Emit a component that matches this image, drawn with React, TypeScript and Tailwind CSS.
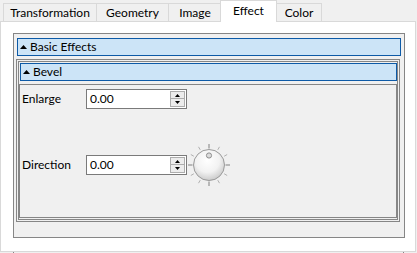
import React from 'react';

const GRAY = 'border-[#868686]';

function Tab({ label, className }: { label: string; className: string }) {
  return (
    <div className={`flex items-center justify-center border-x border-t ${className}`}>
      {label}
    </div>
  );
}

function Arrow({ up }: { up?: boolean }) {
  return (
    <svg width="7" height="4" viewBox="0 0 7 4">
      <polygon points={up ? '3.5,0 7,4 0,4' : '0,0 7,0 3.5,4'} fill="#000" />
    </svg>
  );
}

function SectionHeader({ label, className }: { label: string; className: string }) {
  return (
    <div className={`flex items-center h-[18px] bg-[#cce4f7] border border-[#0d5aa7] ${className}`}>
      <span className="ml-[2px] mr-[3px] flex items-center">
        <Arrow up />
      </span>
      <span className="leading-none">{label}</span>
    </div>
  );
}

function SpinBox({ value }: { value: string }) {
  return (
    <div className="w-[101px] h-[20px] border border-[#7a7a7a] bg-white flex items-center">
      <span className="flex-1 pl-[3px] leading-none">{value}</span>
      <div className="flex flex-col w-[15px] mr-[1px]">
        <div className="h-[8px] border border-[#adadad] bg-[#ececec] flex items-center justify-center">
          <svg width="5" height="3" viewBox="0 0 5 3">
            <polygon points="2.5,0 5,3 0,3" fill="#000" />
          </svg>
        </div>
        <div className="h-[8px] border border-t-0 border-[#adadad] bg-[#ececec] flex items-center justify-center">
          <svg width="5" height="3" viewBox="0 0 5 3">
            <polygon points="0,0 5,0 2.5,3" fill="#000" />
          </svg>
        </div>
      </div>
    </div>
  );
}

function Dial() {
  const ticks = Array.from({ length: 12 }, (_, i) => i * 30);
  return (
    <svg width="44" height="44" viewBox="0 0 44 44">
      <defs>
        <radialGradient id="knob" cx="45%" cy="35%" r="70%">
          <stop offset="0%" stopColor="#ffffff" />
          <stop offset="55%" stopColor="#f2f2f2" />
          <stop offset="100%" stopColor="#c4c4c4" />
        </radialGradient>
      </defs>
      {ticks.map((a) => {
        const major = a % 90 === 0;
        const rad = (a * Math.PI) / 180;
        const r1 = major ? 16.5 : 17.5;
        const r2 = 21;
        return (
          <line
            key={a}
            x1={22 + Math.sin(rad) * r1}
            y1={22 - Math.cos(rad) * r1}
            x2={22 + Math.sin(rad) * r2}
            y2={22 - Math.cos(rad) * r2}
            stroke={major ? '#808080' : '#b0b0b0'}
            strokeWidth="1"
          />
        );
      })}
      <circle cx="22" cy="22" r="15.5" fill="url(#knob)" stroke="#9a9a9a" strokeWidth="1" />
      <circle cx="22" cy="12.5" r="2.6" fill="#dcdcdc" stroke="#8f8f8f" strokeWidth="1" />
    </svg>
  );
}

export default function App() {
  return (
    <div className="w-[417px] h-[253px] overflow-hidden bg-[#f0f0f0] text-[12px] text-black font-['Lato','Liberation_Sans',sans-serif]">
      {/* tab strip */}
      <div className="flex items-end h-[21px] pl-[3px]">
        <Tab label="Transformation" className="w-[94px] h-[18px] border-[#d9d9d9] bg-[#f0f0f0]" />
        <Tab label="Geometry" className="w-[73px] h-[18px] -ml-px border-[#d9d9d9] bg-[#f0f0f0]" />
        <Tab label="Image" className="w-[54px] h-[18px] -ml-px border-[#d9d9d9] bg-[#f0f0f0]" />
        <Tab label="Effect" className="relative z-10 w-[57px] h-[22px] -ml-[2px] -mb-px pb-[2px] border-[#d9d9d9] bg-white" />
        <Tab label="Color" className="w-[46px] h-[18px] -ml-px border-[#d9d9d9] bg-[#f0f0f0]" />
      </div>

      {/* tab page */}
      <div className="w-[416px] h-[231px] border border-[#d9d9d9] bg-white pl-[12px] pt-[11px]">
        <div className={`flex flex-col w-[392px] h-[205px] border ${GRAY} bg-[#f0f0f0]`}>
          <SectionHeader label="Basic Effects" className="mt-[4px] ml-[3px] w-[384px]" />

          <div className={`mt-[3px] ml-[2px] w-[384px] h-[163px] border ${GRAY} p-[1px]`}>
            <div className={`flex flex-col h-full border ${GRAY}`}>
              <SectionHeader label="Bevel" className="mt-[1px] ml-[1px] w-[377px]" />

              <div className={`flex-1 mt-[3px] mb-[1px] border ${GRAY}`}>
                <div className="mt-[4px] flex items-center">
                  <div className="w-[66px] pl-[2px]">Enlarge</div>
                  <SpinBox value="0.00" />
                </div>
                <div className="mt-[34px] flex items-center h-[44px]">
                  <div className="w-[66px] pl-[2px]">Direction</div>
                  <SpinBox value="0.00" />
                  <Dial />
                </div>
              </div>
            </div>
          </div>
        </div>
      </div>

      {/* next group box peeking in */}
      <div className={`ml-[13px] w-[391px] h-[1px] border-x ${GRAY}`} />
    </div>
  );
}
